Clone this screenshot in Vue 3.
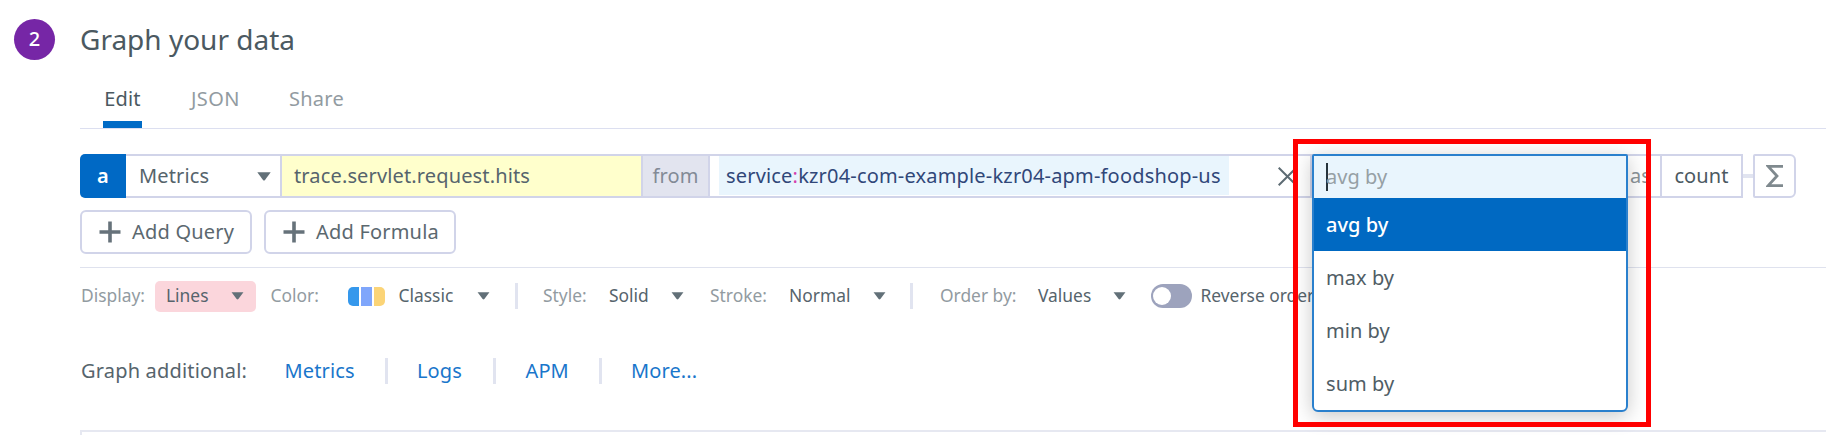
<script setup>
const additional = ['Metrics', 'Logs', 'APM', 'More...']
const options = ['avg by', 'max by', 'min by', 'sum by']
</script>

<template>
  <main class="page">
    <header class="head">
      <span class="step">2</span>
      <h1 class="title">Graph your data</h1>
    </header>

    <section class="body">
      <nav class="tabs">
        <a class="tab active">Edit</a>
        <a class="tab json">JSON</a>
        <a class="tab share">Share</a>
      </nav>

      <div class="query">
        <span class="letter">a</span>
        <span class="cell source">Metrics<svg class="caret" width="14" height="9" viewBox="0 0 14 9"><path d="M0.3 0.3h13.4L8 8q-1 1-2 0z" /></svg></span>
        <span class="cell metric">trace.servlet.request.hits</span>
        <span class="cell from">from</span>
        <span class="cell filter">
          <span class="tag">service<i>:</i>kzr04-com-example-kzr04-apm-foodshop-us</span>
          <svg class="close" width="19" height="19" viewBox="0 0 19 19"><path d="M0.7 0.7l17.6 17.6M18.3 0.7L0.7 18.3" /></svg>
        </span>
        <span class="cell as">as</span>
        <span class="cell count">count</span>
        <span class="joint"></span>
        <span class="sigma"><svg width="17" height="22" viewBox="0 0 17 22"><path d="M17 1.4H2.2L11 11L2.2 20.6H17" /></svg></span>

        <div class="dropdown">
          <div class="search"><span class="cursor"></span>avg by</div>
          <ul>
            <li v-for="(o, i) in options" :key="o" :class="{ on: i === 0 }">{{ o }}</li>
          </ul>
        </div>
        <div class="highlight"></div>
      </div>

      <div class="buttons">
        <button class="btn b-query"><svg width="22" height="22" viewBox="0 0 22 22"><path d="M11 0.5v21M0.5 11h21" /></svg>Add Query</button>
        <button class="btn b-formula"><svg width="22" height="22" viewBox="0 0 22 22"><path d="M11 0.5v21M0.5 11h21" /></svg>Add Formula</button>
      </div>

      <div class="options">
        <span class="lab">Display:</span>
        <span class="pill">Lines<svg class="caret" width="13" height="8" viewBox="0 0 14 9"><path d="M0.3 0.3h13.4L8 8q-1 1-2 0z" /></svg></span>
        <span class="lab">Color:</span>
        <span class="swatch"><i></i><i></i><i></i></span>
        <span>Classic</span>
        <svg class="caret" width="13" height="8" viewBox="0 0 14 9"><path d="M0.3 0.3h13.4L8 8q-1 1-2 0z" /></svg>
        <span class="bar"></span>
        <span class="lab">Style:</span>
        <span>Solid</span>
        <svg class="caret" width="13" height="8" viewBox="0 0 14 9"><path d="M0.3 0.3h13.4L8 8q-1 1-2 0z" /></svg>
        <span class="lab">Stroke:</span>
        <span>Normal</span>
        <svg class="caret" width="13" height="8" viewBox="0 0 14 9"><path d="M0.3 0.3h13.4L8 8q-1 1-2 0z" /></svg>
        <span class="bar"></span>
        <span class="lab">Order by:</span>
        <span>Values</span>
        <svg class="caret" width="13" height="8" viewBox="0 0 14 9"><path d="M0.3 0.3h13.4L8 8q-1 1-2 0z" /></svg>
        <span class="toggle"></span>
        <span>Reverse order</span>
      </div>

      <div class="additional">
        <span class="caption">Graph additional:</span>
        <template v-for="(l, i) in additional" :key="l">
          <span v-if="i" class="bar"></span>
          <a>{{ l }}</a>
        </template>
      </div>

      <div class="panel"></div>
    </section>
  </main>
</template>

<style>
body { background: #fff; overflow: hidden; }
</style>

<style scoped>
* { box-sizing: border-box; }
.page { width: 1826px; height: 435px; overflow: hidden; background: #fff; color: #56646c; font: 20px/1 "Noto Sans", sans-serif; letter-spacing: .12px; white-space: nowrap; }
.page svg { flex: none; display: block; }
.head { display: flex; align-items: center; height: 78px; padding-left: 14px; }
.step { width: 41px; height: 41px; border-radius: 50%; background: #7626a6; color: #fff; font-weight: 500; display: flex; align-items: center; justify-content: center; }
.title { margin: 0 0 0 25px; font-size: 28px; font-weight: 400; letter-spacing: 0; color: #4b5961; }
.body { margin-left: 80px; }
.tabs { display: flex; height: 51px; border-bottom: 1px solid #dcdff0; }
.tab { height: 50px; display: flex; align-items: center; padding-bottom: 9px; color: #929ba1; }
.active { margin-left: 23px; width: 39px; justify-content: center; color: #4b5961; border-bottom: 7px solid #006bc6; padding-bottom: 2px; }
.json { margin-left: 49px; letter-spacing: .4px; }
.share { margin-left: 49px; letter-spacing: .3px; }
.query { position: relative; z-index: 2; display: flex; align-items: center; height: 44px; margin-top: 25px; }
.letter { width: 46px; height: 44px; border-radius: 5px 0 0 5px; background: #0069c5; color: #fff; font-weight: 600; display: flex; align-items: center; justify-content: center; }
.cell { height: 44px; border: 2px solid #d1d4e9; border-left: 0; display: flex; align-items: center; }
.source { width: 156px; padding: 0 9px 0 13px; justify-content: space-between; }
.caret { fill: #627078; }
.metric { width: 361px; background: #ffffcc; padding-left: 12px; letter-spacing: .14px; }
.from { width: 67px; background: #e2e4ef; color: #828a96; justify-content: center; }
.filter { width: 602px; padding-left: 9px; }
.tag { height: 39px; margin-bottom: 1px; width: 510px; background: #e9f5fd; color: #304779; padding-left: 7px; letter-spacing: .18px; display: flex; align-items: center; }
.tag i { color: #d63fae; font-style: normal; }
.close { margin-left: 49px; stroke: #5d6b73; stroke-width: 2; }
.as { width: 350px; justify-content: flex-end; padding-right: 9px; color: #8b9499; }
.count { width: 81px; justify-content: center; color: #4b5961; }
.joint { width: 10px; height: 4px; background: #e1e4f0; }
.sigma { width: 43px; height: 44px; border: 2px solid #d1d4e9; border-radius: 2px 6px 6px 2px; display: flex; align-items: center; justify-content: center; }
.sigma path { fill: none; stroke: #7f898e; stroke-width: 2.8; }
.dropdown { position: absolute; left: 1232px; top: 0; width: 316px; height: 258px; border: 2px solid #2a80cd; border-radius: 2px 2px 6px 6px; background: #fff; box-shadow: 0 4px 20px rgba(0, 0, 0, .22); overflow: hidden; letter-spacing: .05px; }
.search { height: 42px; background: #e9f5fd; color: #96a0a5; display: flex; align-items: center; padding-left: 12px; }
.cursor { width: 2px; height: 28px; background: #26333b; margin-right: -2px; }
.dropdown ul { list-style: none; margin: 0; padding: 0; }
.dropdown li { height: 53px; padding-left: 12px; display: flex; align-items: center; color: #505d65; }
.dropdown li.on { background: #0069c2; color: #fff; font-weight: 500; }
.highlight { position: absolute; left: 1213px; top: -15px; width: 358px; height: 288px; border: 5px solid #f00; }
.buttons { display: flex; gap: 12px; margin-top: 12px; }
.btn { height: 44px; border: 2px solid #d1d4e9; border-radius: 6px; background: #fff; color: #5b686f; font: inherit; letter-spacing: .2px; padding: 0 0 0 17px; display: flex; align-items: center; gap: 11px; }
.btn path { stroke: #66727a; stroke-width: 3.6; }
.b-query { width: 172px; }
.b-formula { width: 192px; }
.options {
  display: grid;
  grid-template-columns: 75px 115.5px 77.5px 50.5px 78.5px 38px 28px 66px 62px 39px 79px 84px 37px 30px 98px 75px 37.5px 50px auto;
  align-items: center;
  justify-content: start;
  height: 57px;
  margin-top: 13px;
  border-top: 1px solid #dfe2ee;
  font-size: 17.4px;
  letter-spacing: 0;
}
.lab { color: #929ba1; }
.lab:first-child { padding-left: 1px; }
.pill { width: 101px; height: 31px; padding: 0 12px 0 11px; border-radius: 5px; background: #fbd6dc; display: flex; align-items: center; justify-content: space-between; }
.swatch { display: flex; gap: 1.5px; }
.swatch i { width: 11.3px; height: 19px; background: #7fa6fb; }
.swatch i:first-child { background: #3598ec; border-radius: 5px 0 0 5px; }
.swatch i:last-child { background: #fbd477; border-radius: 0 5px 5px 0; }
.bar { width: 3px; height: 26px; background: #e1e4f0; }
.toggle { display: flex; align-items: center; width: 41px; height: 24px; padding-left: 2px; border-radius: 12px; background: #9da3bd; }
.toggle::before { content: ""; width: 18px; height: 18px; border-radius: 50%; background: #fff; }
.additional {
  display: grid;
  grid-template-columns: 204.5px 100.5px 32px 75.5px 33px 73.5px 32px auto;
  align-items: center;
  justify-content: start;
  height: 36px;
  margin-top: 29px;
}
.caption { padding-left: 1px; letter-spacing: .18px; }
.additional a { color: #1976cb; }
.panel { height: 40px; margin-top: 41px; border: 2px solid #e6e8f1; border-right: 0; }
</style>
